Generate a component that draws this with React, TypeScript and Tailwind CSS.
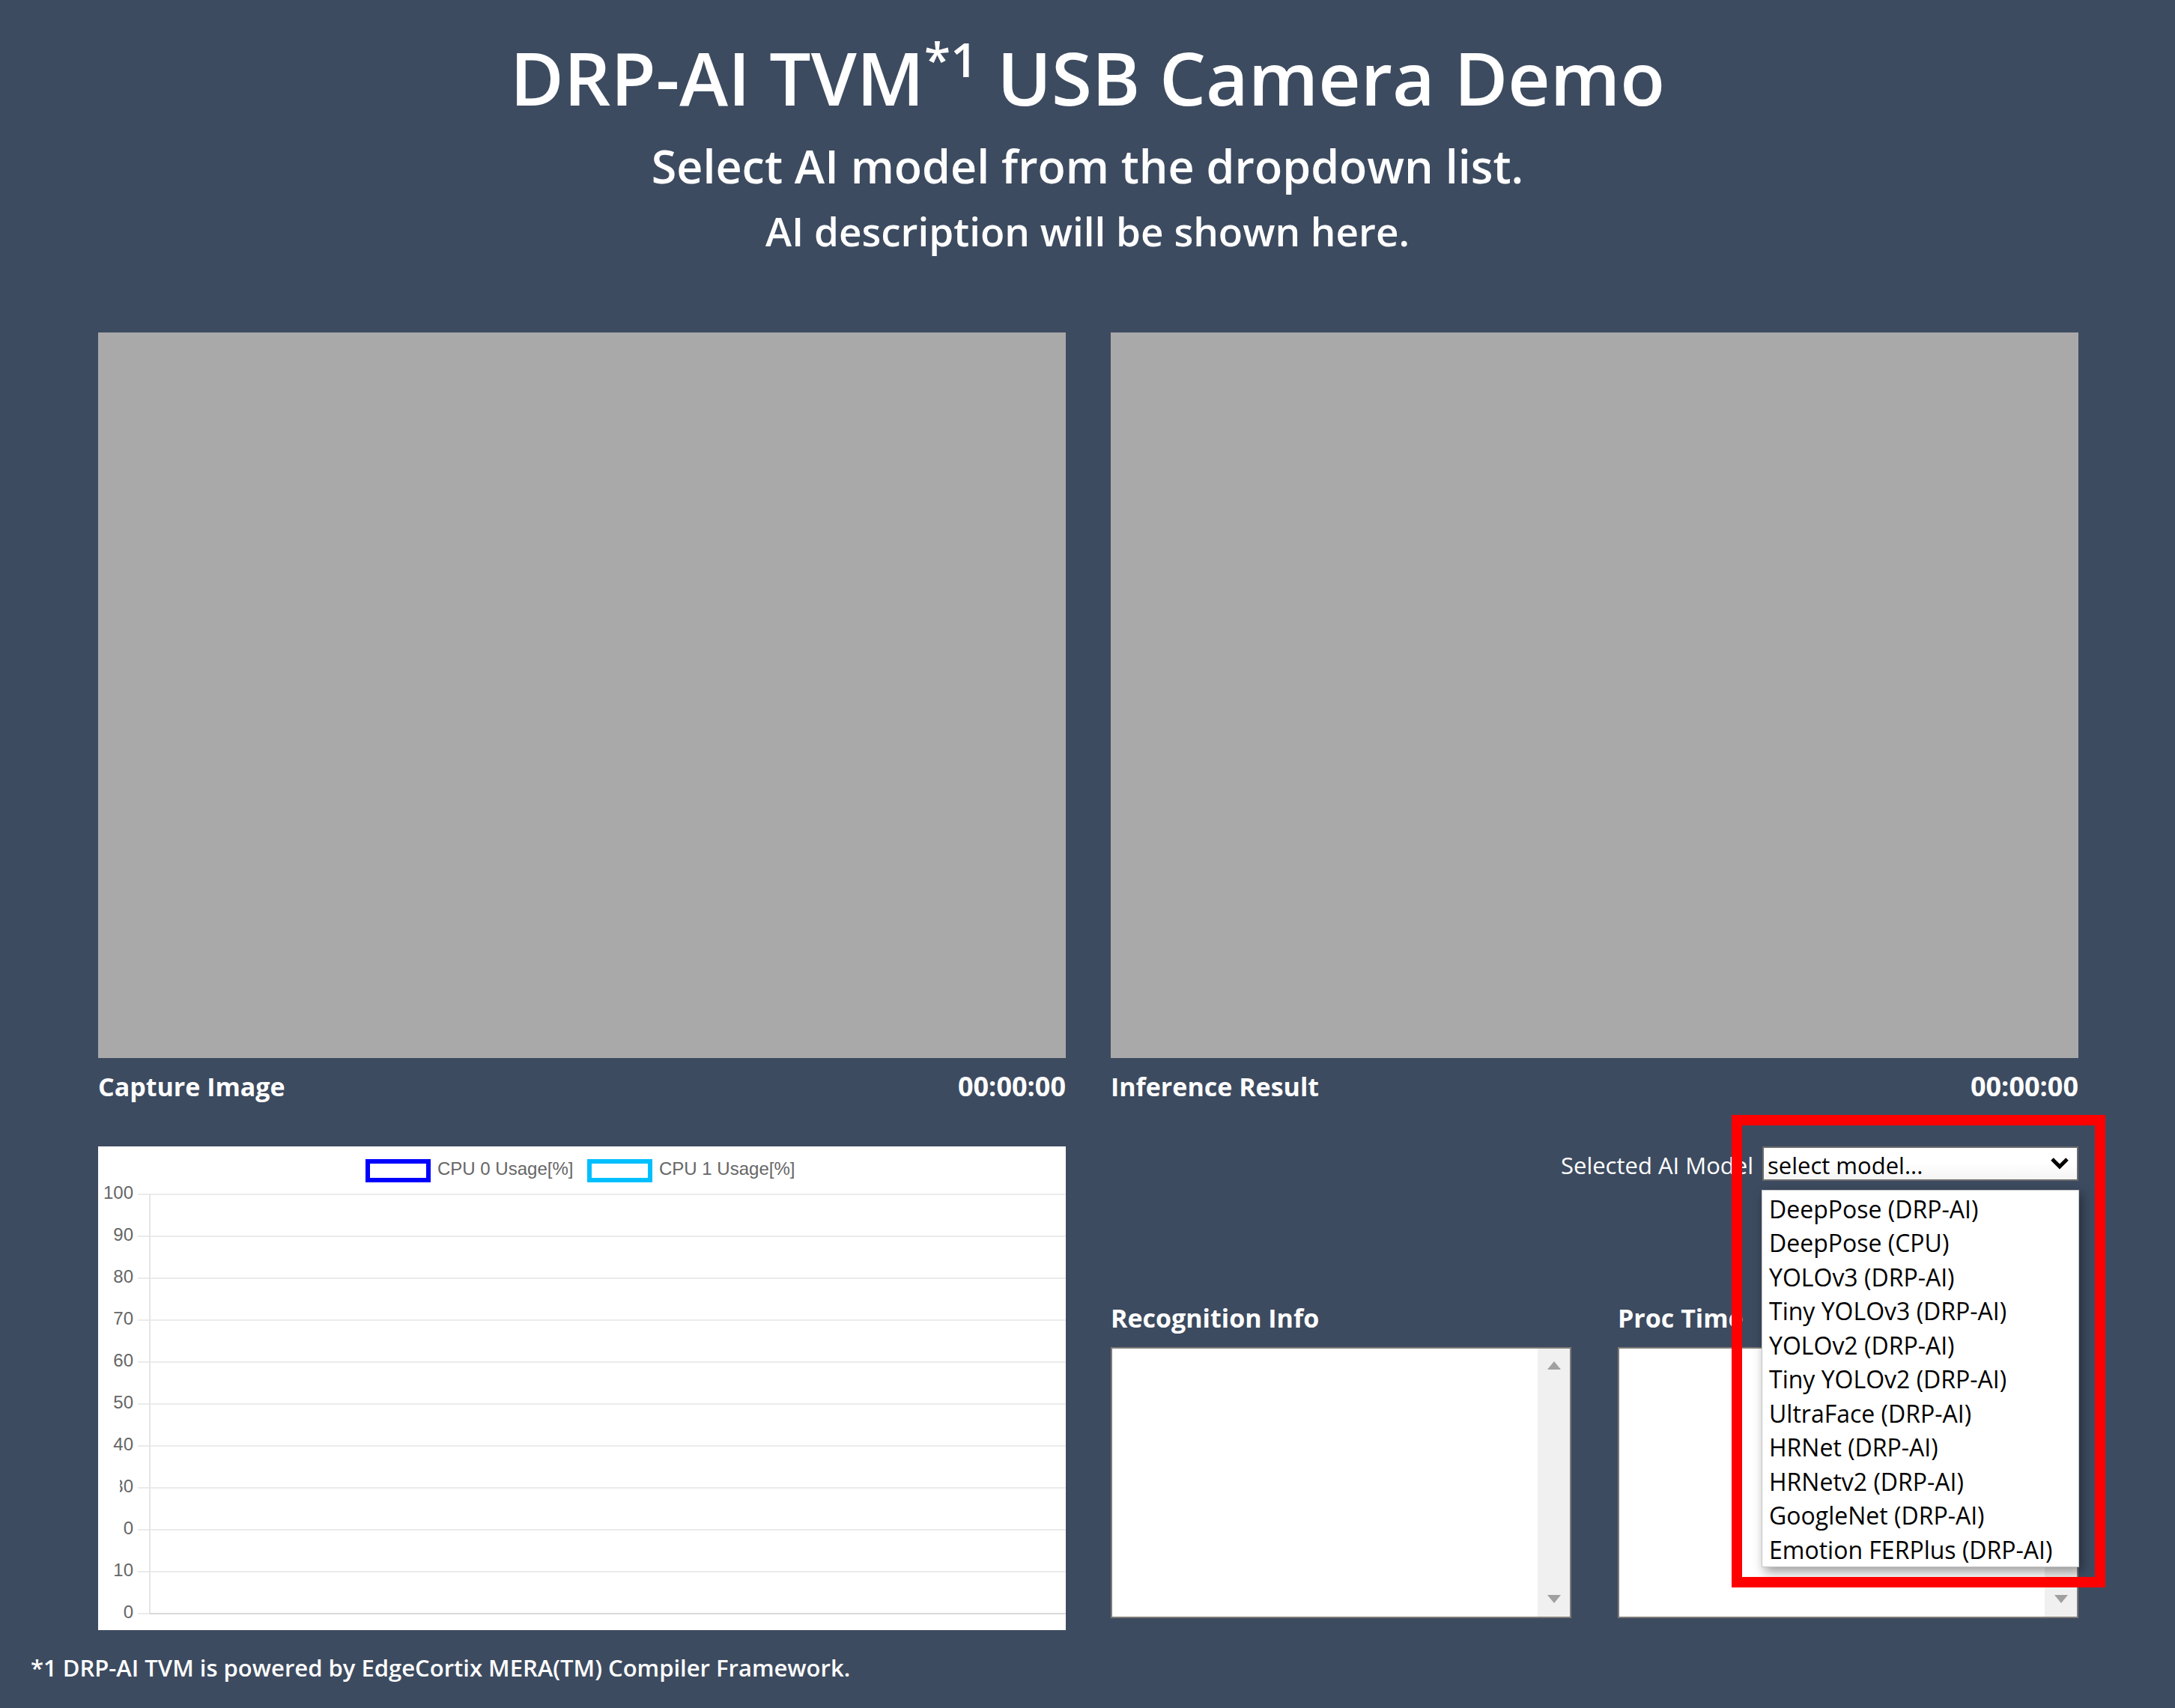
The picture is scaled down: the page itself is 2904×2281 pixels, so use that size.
const MODELS = [
  "DeepPose (DRP-AI)",
  "DeepPose (CPU)",
  "YOLOv3 (DRP-AI)",
  "Tiny YOLOv3 (DRP-AI)",
  "YOLOv2 (DRP-AI)",
  "Tiny YOLOv2 (DRP-AI)",
  "UltraFace (DRP-AI)",
  "HRNet (DRP-AI)",
  "HRNetv2 (DRP-AI)",
  "GoogleNet (DRP-AI)",
  "Emotion FERPlus (DRP-AI)",
];

const TICKS = ["100", "90", "80", "70", "60", "50", "40", "30", "0", "10", "0"];

function VideoPanel({ title }: { title: string }) {
  return (
    <section>
      <div className="aspect-[4/3] w-full bg-[#a9a9a9]" />
      <div className="flex items-baseline justify-between text-[34px] leading-[75px] font-bold">
        <h2>{title}</h2>
        <time className="text-[36px]">00:00:00</time>
      </div>
    </section>
  );
}

function CpuChart() {
  return (
    <svg
      viewBox="0 0 1292 646"
      className="block w-full bg-white font-['Liberation_Sans',Arial,sans-serif] text-[24px]"
      role="img"
      aria-label="CPU usage"
    >
      <defs>
        <clipPath id="tick-edge">
          <rect x="29" y="430" width="30" height="50" />
        </clipPath>
      </defs>
      <rect x="360" y="20" width="81" height="25" fill="none" stroke="#0000ff" strokeWidth="6" />
      <text x="453" y="38" fill="#666">CPU 0 Usage[%]</text>
      <rect x="656" y="20" width="81" height="25" fill="none" stroke="#00bfff" strokeWidth="6" />
      <text x="749" y="38" fill="#666">CPU 1 Usage[%]</text>
      {TICKS.map((label, i) => {
        const y = 64 + i * 56;
        return (
          <g key={i}>
            <line x1="53" x2="1292" y1={y} y2={y} stroke="#ebebeb" strokeWidth="2" />
            <text
              x="47"
              y={y + 6}
              textAnchor="end"
              fill="#666"
              clipPath={label === "30" ? "url(#tick-edge)" : undefined}
            >
              {label}
            </text>
          </g>
        );
      })}
      <line x1="69" x2="69" y1="64" y2="624" stroke="#e5e5e5" strokeWidth="2" />
      <line x1="69" x2="1292" y1="624" y2="624" stroke="#d8d8d8" strokeWidth="2" />
    </svg>
  );
}

function OutputBox({ id, title }: { id: string; title: string }) {
  return (
    <div className="flex flex-1 flex-col">
      <label htmlFor={id} className="mb-[15px] text-[34px] leading-[48px] font-bold">
        {title}
      </label>
      <div className="flex border-2 border-[#7d7a76] bg-white">
        <textarea
          id={id}
          readOnly
          className="h-[358px] min-w-0 flex-1 resize-none overflow-hidden text-[32px] text-black outline-none"
        />
        <div className="flex w-[43px] flex-col items-center justify-between bg-[#f0f0f0] pt-[17px] pb-[18px]">
          <svg width="18" height="11" viewBox="0 0 18 11" fill="#a0a0a0">
            <path d="M0 11 9 0l9 11z" />
          </svg>
          <svg width="18" height="11" viewBox="0 0 18 11" fill="#a0a0a0">
            <path d="M0 0h18L9 11z" />
          </svg>
        </div>
      </div>
    </div>
  );
}

function ModelPicker() {
  return (
    <div className="flex items-center justify-end gap-3 text-[31px]">
      <label htmlFor="model" className="pt-1 leading-[41px]">
        Selected AI Model
      </label>
      <div className="relative w-[422px]">
        <select
          id="model"
          defaultValue=""
          className="block h-[46px] w-full appearance-none border-2 border-[#6b6b6b] bg-linear-to-b from-white from-50% to-[#f4f4f4] pt-[4px] pl-[5px] leading-[38px] text-black"
        >
          <option value="">select model...</option>
          {MODELS.map((m) => (
            <option key={m}>{m}</option>
          ))}
        </select>
        <svg
          className="pointer-events-none absolute top-[14px] right-[13px]"
          width="24"
          height="17"
          viewBox="0 0 24 17"
          fill="none"
          stroke="#000"
          strokeWidth="5"
        >
          <path d="M2 3l10 10L22 3" />
        </svg>
        <ul
          role="listbox"
          aria-label="AI models"
          className="absolute top-[58px] -right-px -left-px z-10 grid min-h-[504px] border border-[#c4c4c4] bg-white pt-[2px] pl-[9px] text-[32px] leading-[45px] text-black shadow-[4px_6px_14px_rgba(0,0,0,0.4)]"
        >
          {MODELS.map((m) => (
            <li key={m} role="option" aria-selected="false" className="whitespace-nowrap">
              {m}
            </li>
          ))}
        </ul>
        <div className="pointer-events-none absolute -top-[42px] -right-[36px] -left-[41px] z-20 h-[631px] border-[14px] border-[#ff0000]" />
      </div>
    </div>
  );
}

export default function App() {
  return (
    <div className="min-h-screen bg-[#3d4b60] pt-[38px] font-['Open_Sans','Noto_Sans',sans-serif] text-white">
      <header className="text-center font-semibold">
        <h1 className="text-[98px] leading-[130px]">
          DRP-AI TVM<sup className="-top-[0.6em] text-[64px]">*1</sup> USB Camera Demo
        </h1>
        <p className="text-[61px] leading-[108px]">Select AI model from the dropdown list.</p>
        <p className="text-[53px] leading-[66px]">AI description will be shown here.</p>
      </header>
      <main className="mt-[102px] mr-[129px] ml-[131px] grid grid-cols-2 gap-x-[60px] gap-y-[42px]">
        <VideoPanel title="Capture Image" />
        <VideoPanel title="Inference Result" />
        <CpuChart />
        <section>
          <ModelPicker />
          <div className="mt-[159px] flex gap-[62px]">
            <OutputBox id="recognition" title="Recognition Info" />
            <OutputBox id="proc-time" title="Proc Time" />
          </div>
        </section>
      </main>
      <footer className="mt-[30px] ml-[41px] text-[31px] leading-[40px] font-semibold">
        *1 DRP-AI TVM is powered by EdgeCortix MERA(TM) Compiler Framework.
      </footer>
    </div>
  );
}
